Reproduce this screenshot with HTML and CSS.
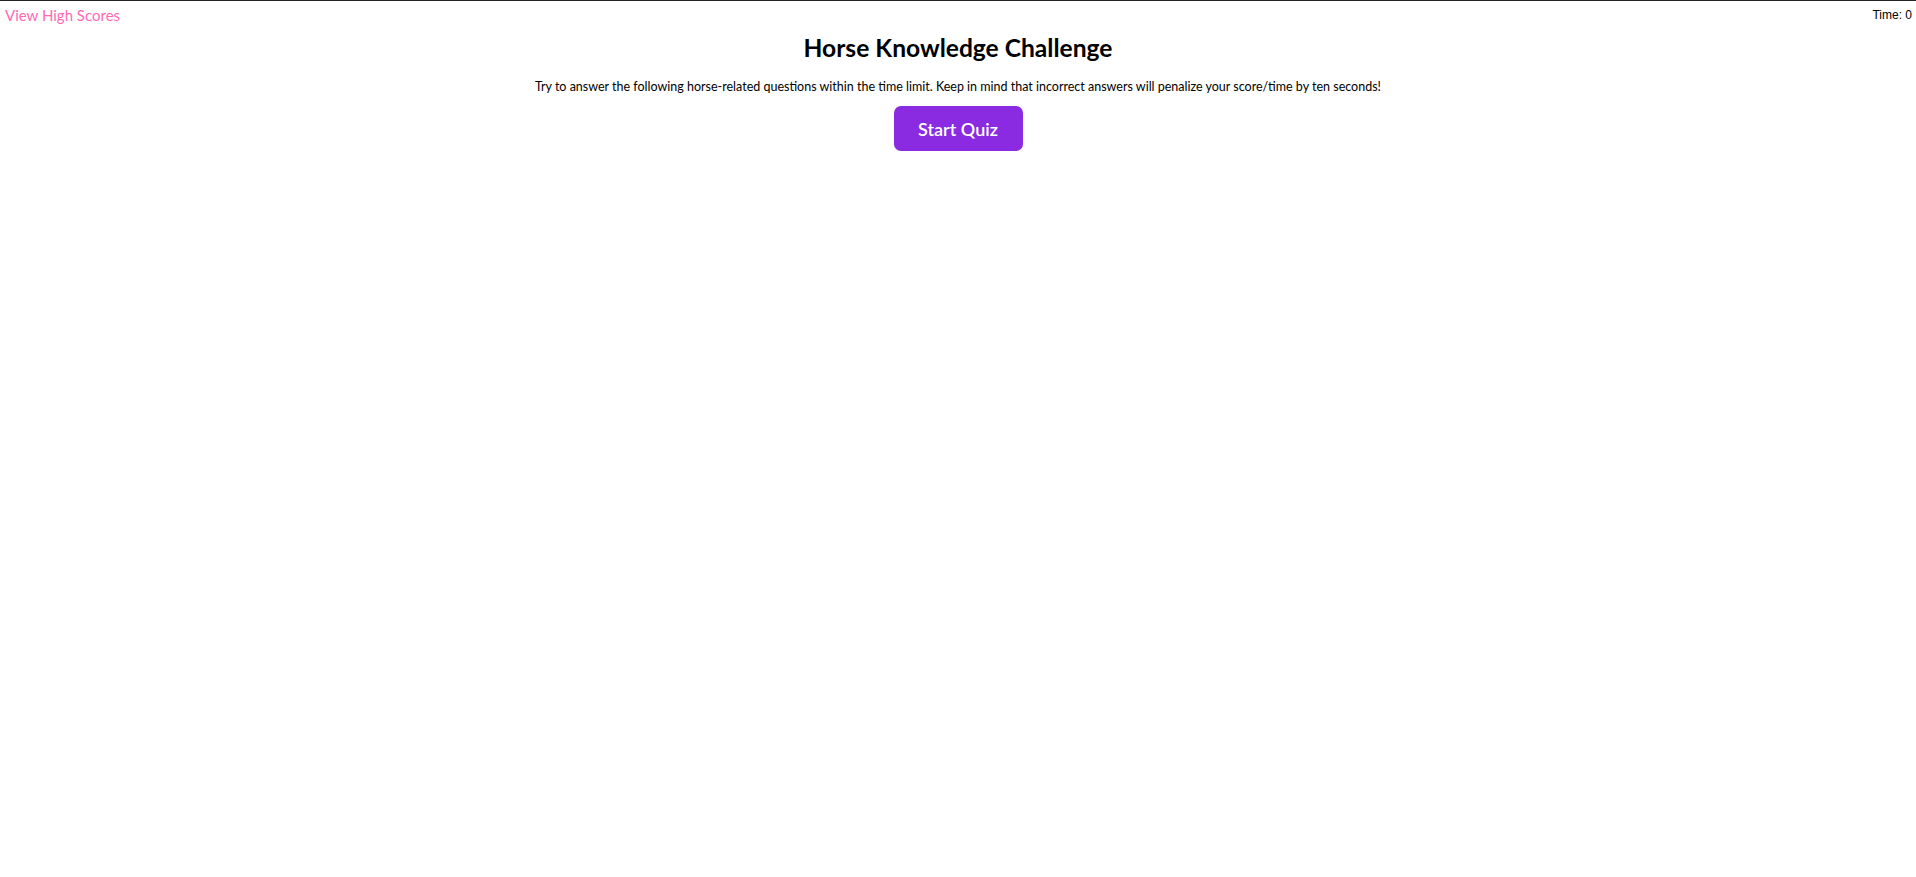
FILE: index.html
```html
<!DOCTYPE html>
<html>
<head>
<meta charset="utf-8">
<link rel="stylesheet" href="styles.css">
</head>
<body>
<header class="top-bar">
  <a class="high-scores" href="#">View High Scores</a>
  <span class="timer">Time: 0</span>
</header>
<main class="intro">
  <h1 class="title">Horse Knowledge Challenge</h1>
  <p class="desc">Try to answer the following horse-related questions within the time limit. Keep in mind that incorrect answers will penalize your score/time by ten seconds!</p>
  <button class="start-btn">Start Quiz</button>
</main>
</body>
</html>
```
FILE: styles.css
```css
html, body {
  margin: 0;
  padding: 0;
  background: #fff;
}
body {
  border-top: 1px solid #222;
  font-family: "Lato", "Open Sans", sans-serif;
  color: #000;
}
.top-bar {
  display: flex;
  justify-content: space-between;
  align-items: flex-start;
  padding: 4px 4px 0 5px;
}
.high-scores {
  color: #ff69b4;
  text-decoration: none;
  font-size: 15px;
  line-height: 20px;
}
.timer {
  font-family: "Liberation Sans", Arial, sans-serif;
  font-size: 12px;
  line-height: 14px;
  padding-top: 3px;
}
.intro {
  display: flex;
  flex-direction: column;
  align-items: center;
}
.title {
  margin: 8px 0 0;
  font-size: 24.6px;
  line-height: 30px;
  font-weight: 700;
}
.desc {
  margin: 16px 0 0;
  font-size: 12.5px;
  line-height: 16px;
}
.start-btn {
  margin-top: 11px;
  width: 129px;
  height: 45px;
  border: none;
  border-radius: 7px;
  background: #8a2be2;
  color: #fff;
  font-family: inherit;
  font-size: 18px;
  font-weight: 600;
  cursor: pointer;
}
```
